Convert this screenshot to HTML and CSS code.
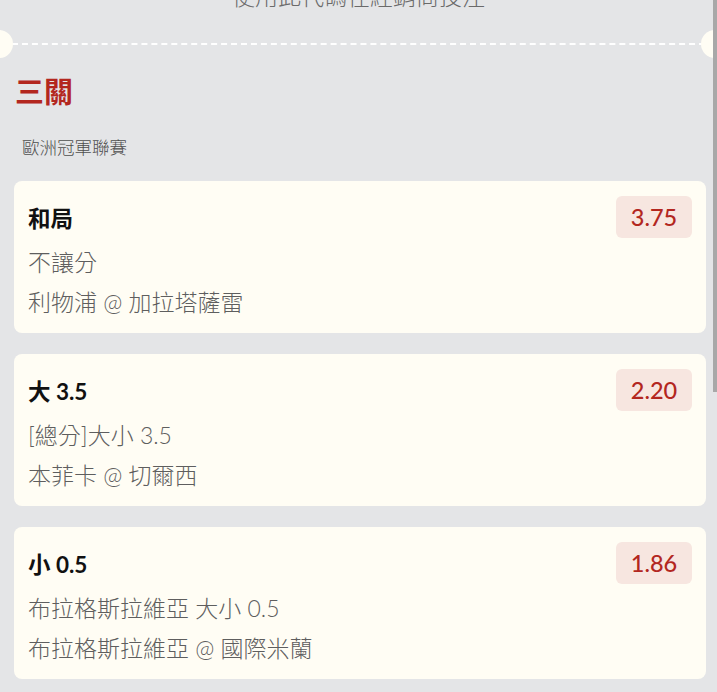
FILE: index.html
```html
<!DOCTYPE html>
<html lang="zh-Hant">
<head>
<meta charset="utf-8">
<link rel="stylesheet" href="styles.css">
</head>
<body>
<div class="page">
  <div class="top">使用此代碼在經銷商投注</div>
  <div class="divider"></div>
  <div class="content">
    <h2 class="heading">三關</h2>
    <div class="league">歐洲冠軍聯賽</div>
    <div class="card">
      <div class="row"><span class="title">和局</span><span class="odds">3.75</span></div>
      <div class="line">不讓分</div>
      <div class="line">利物浦 @ 加拉塔薩雷</div>
    </div>
    <div class="card">
      <div class="row"><span class="title">大 3.5</span><span class="odds">2.20</span></div>
      <div class="line">[總分]大小 3.5</div>
      <div class="line">本菲卡 @ 切爾西</div>
    </div>
    <div class="card">
      <div class="row"><span class="title">小 0.5</span><span class="odds">1.86</span></div>
      <div class="line">布拉格斯拉維亞 大小 0.5</div>
      <div class="line">布拉格斯拉維亞 @ 國際米蘭</div>
    </div>
  </div>
</div>
<div class="scrollbar"></div>
</body>
</html>
```
FILE: styles.css
```css
html, body {
  margin: 0;
  padding: 0;
  background: #e4e5e7;
  overflow: hidden;
}
body {
  font-family: Lato, "Noto Sans CJK TC", "Noto Sans", sans-serif;
  width: 717px;
  height: 692px;
  position: relative;
}
.page {
  display: flex;
  flex-direction: column;
}
.top {
  margin-top: -19px;
  height: 30px;
  line-height: 30px;
  text-align: center;
  font-size: 23px;
  font-weight: 300;
  color: #6a6a6a;
}
.divider {
  position: relative;
  margin: 32px 12px 0 12px;
  height: 0;
  border-top: 2px dashed #ffffff;
}
.divider::before,
.divider::after {
  content: "";
  position: absolute;
  top: -15px;
  width: 28px;
  height: 28px;
  border-radius: 50%;
  background: #fffdf4;
}
.divider::before { left: -27px; }
.divider::after { right: -24px; }
.content {
  display: flex;
  flex-direction: column;
  padding: 0 11px 0 14px;
}
.heading {
  margin: 27px 0 0 1px;
  font-size: 29px;
  line-height: 40px;
  font-weight: 700;
  color: #b3271f;
}
.league {
  margin: 24px 0 0 8px;
  font-size: 17.5px;
  line-height: 24px;
  font-weight: 300;
  color: #4f4f4f;
}
.card {
  margin-top: 21px;
  background: #fffdf4;
  border-radius: 8px;
  padding: 15px 14px 11px 14px;
  display: flex;
  flex-direction: column;
}
.row {
  display: flex;
  justify-content: space-between;
  align-items: center;
  height: 42px;
  margin-bottom: 4px;
}
.title {
  font-size: 22.5px;
  font-weight: 700;
  color: #111;
}
.odds {
  min-width: 76px;
  height: 42px;
  box-sizing: border-box;
  line-height: 42px;
  text-align: center;
  background: #f7e6e0;
  border-radius: 6px;
  color: #b3271f;
  font-size: 23.5px;
  font-weight: 500;
}
.line {
  height: 40px;
  line-height: 40px;
  font-size: 23px;
  font-weight: 300;
  color: #5e5e5e;
}
.scrollbar {
  position: absolute;
  top: 0;
  right: 0;
  width: 4px;
  height: 392px;
  background: #a8a8a8;
}
```
